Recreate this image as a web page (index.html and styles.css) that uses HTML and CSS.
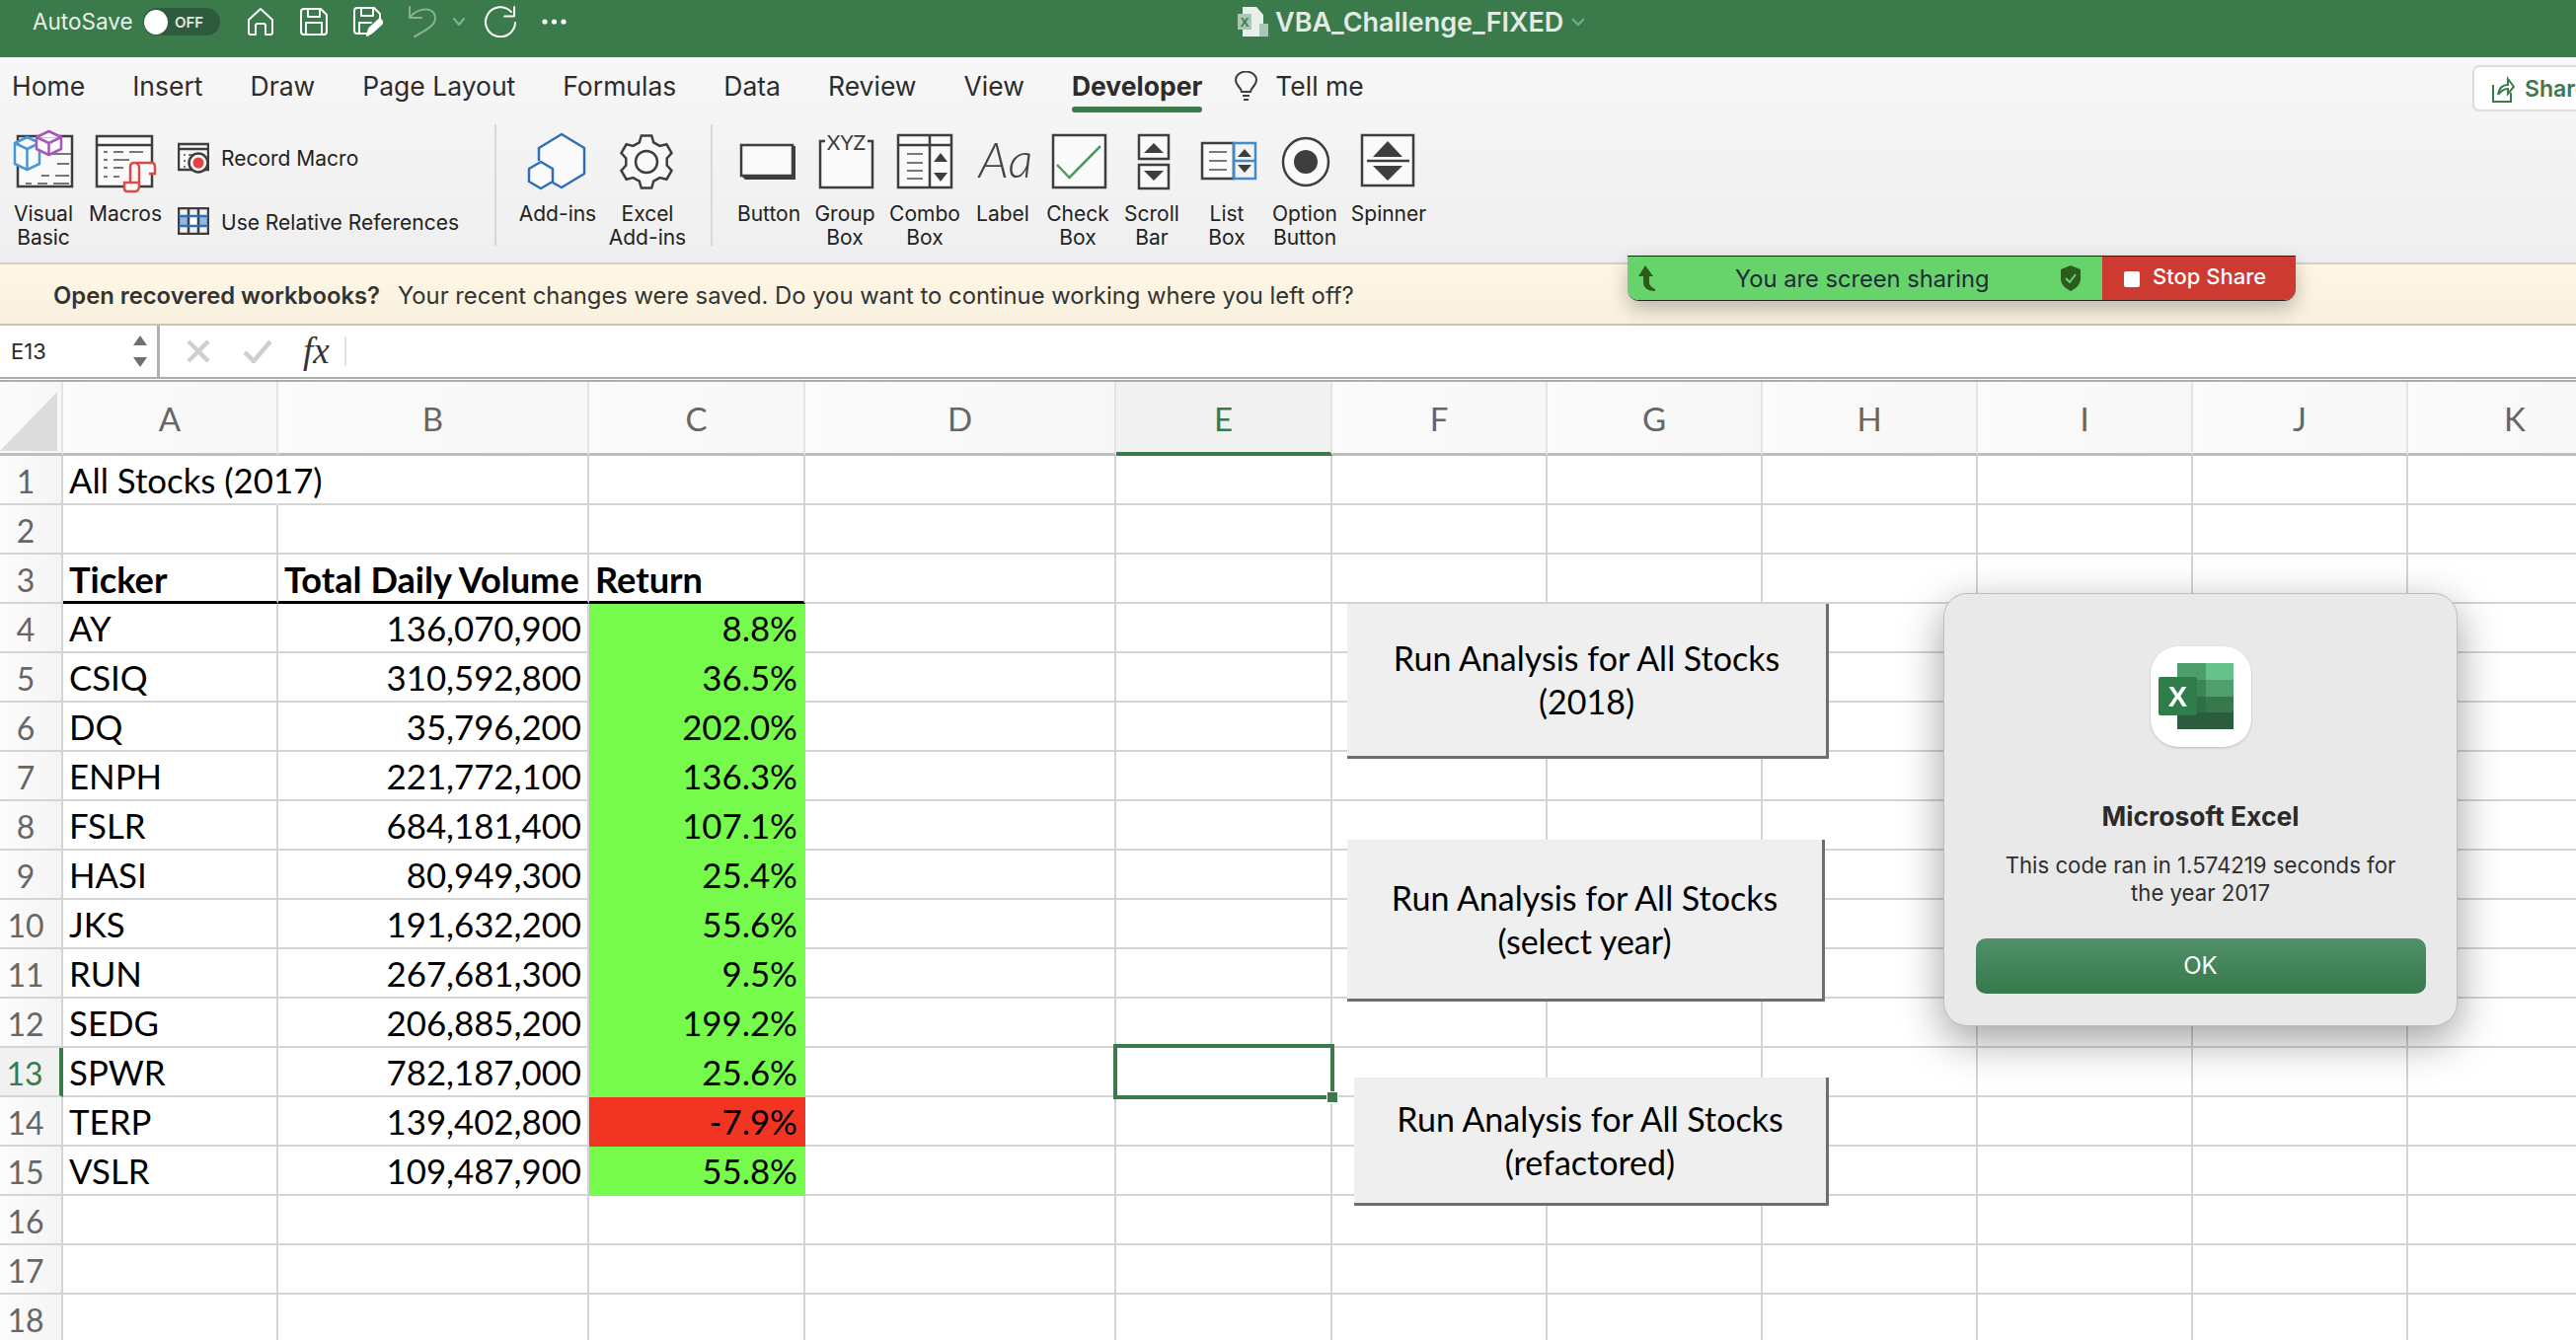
FILE: index.html
```html
<!DOCTYPE html>
<html lang="en">
<head>
    <meta charset="UTF-8">
    <title>VBA_Challenge_FIXED</title>
    <link rel="stylesheet" href="styles.css">
</head>
<body>
<div class="page">
    <div class="titlebar">
        <span class="autosave">AutoSave</span>
        <span class="toggle"><span class="knob"></span><span class="toggle-text">OFF</span></span>
        <div class="quick">
            <svg width="28" height="30" viewBox="0 0 28 30" class="qi"><path d="M2 13 14 2l12 11v13a2 2 0 0 1-2 2h-5v-9a2 2 0 0 0-2-2h-6a2 2 0 0 0-2 2v9H4a2 2 0 0 1-2-2z"/></svg>
            <svg width="28" height="28" viewBox="0 0 28 28" class="qi"><path d="M4 1h17l6 6v17a3 3 0 0 1-3 3H4a3 3 0 0 1-3-3V4a3 3 0 0 1 3-3zM8 1v8h12V1M6 27V15h16v12"/></svg>
            <svg width="30" height="30" viewBox="0 0 30 30" class="qi"><path d="M15 27H4a3 3 0 0 1-3-3V4a3 3 0 0 1 3-3h17l6 6v6M8 1v8h12V1M6 27V16h12"/><path d="M14 29l2-7 11-10 3 4-11 10z" class="qi-fill"/></svg>
            <svg width="28" height="32" viewBox="0 0 28 32" class="qi dim"><path d="M1 1v11h12M1 12C8 2 27-1 27 13c0 6-8 11-21 18"/></svg>
            <svg width="12" height="9" viewBox="0 0 12 9" class="qi dim qi-chev"><path d="M1 1l5 6 5-6"/></svg>
            <svg width="32" height="32" viewBox="0 0 32 32" class="qi qi-redo"><path d="M27 6A15 15 0 1 0 31 17M30 1v9.5H20"/></svg>
            <svg width="25" height="6" viewBox="0 0 25 6" class="qi-dots"><circle cx="3" cy="3" r="2.6"/><circle cx="12.5" cy="3" r="2.6"/><circle cx="22" cy="3" r="2.6"/></svg>
        </div>
        <div class="doc-title">
            <svg width="32" height="32" viewBox="0 0 32 32"><path d="M5 1h14l7 8v22H5z" fill="#e9f0eb"/><rect x="0" y="8" width="14" height="16" fill="#a9c7b3"/><text x="7" y="21" class="doc-x">X</text><rect x="22" y="18" width="9" height="13" fill="#a9c7b3"/></svg>
            <span>VBA_Challenge_FIXED</span>
            <svg width="14" height="9" viewBox="0 0 14 9" class="doc-chev"><path d="M1 1l6 6 6-6"/></svg>
        </div>
    </div>

    <div class="ribbon">
        <div class="tabs">
            <span class="tab">Home</span>
            <span class="tab">Insert</span>
            <span class="tab">Draw</span>
            <span class="tab">Page Layout</span>
            <span class="tab">Formulas</span>
            <span class="tab">Data</span>
            <span class="tab">Review</span>
            <span class="tab">View</span>
            <span class="tab active">Developer</span>
            <span class="tell">
                <svg width="23" height="30" viewBox="0 0 23 30" class="ln-thin"><path d="M7 21c0-4-6-6-6-12a10.5 8.5 0 0 1 21 0c0 6-6 8-6 12zM8 25h7M9 29h5"/></svg>
                Tell me
            </span>
            <span class="share">
                <svg width="24" height="30" viewBox="0 0 24 30" class="ln-share"><path d="M2 11v17h18v-9M7 21c1-7 5-10 10-10V5l6 8-6 7v-5c-4 0-7 2-10 6z"/></svg>
                Share
            </span>
        </div>
        <div class="tools">
            <div class="item w-vb">
                <svg width="64" height="70" viewBox="0 0 64 70" class="ln">
                    <path d="M6 8h55v51H6z"/>
                    <path d="M40 26h20M46 36h12M30 48h8M44 48h14M14 56h6M26 56h10M42 56h16" class="dash"/>
                    <path d="M15.5 9 28 15v21l-12.5 6L3 36V15zM3 15l12.5 6L28 15M15.5 21v21" class="blue"/>
                    <path d="M37.5 3 50 9v12l-12.5 6L25 21V9zM25 9l12.5 6L50 9M37.5 15v12" class="purple"/>
                </svg>
                <span class="label">Visual<br>Basic</span>
            </div>
            <div class="item w-macros">
                <svg width="64" height="70" viewBox="0 0 64 70" class="ln">
                    <path d="M3 8h56v51H3zM3 17h56"/>
                    <path d="M10 24h4M20 24h10M36 24h14M10 32h4M20 32h16M10 40h4M20 40h10M10 49h4M20 49h6" class="dash"/>
                    <path d="M37 55V39c0-3 2-4 4-4h18c2 0 3 2 3 5v6h-6M41 35c3 0 5 2 5 5v18c0 4-1 6-4 6H34c-2 0-3-1-3-3v-6h15" class="red"/>
                </svg>
                <span class="label">Macros</span>
            </div>
            <div class="stack">
                <div class="stack-row">
                    <svg width="32" height="32" viewBox="0 0 32 32" class="ln">
                        <path d="M1 2h30v26H1zM1 7h30"/>
                        <path d="M6 13h2M11 13h5M6 19h2M6 25h2" class="dash"/>
                        <circle cx="21" cy="21" r="9.5" class="rec-ring"/>
                        <circle cx="21" cy="21" r="5.5" class="rec-dot"/>
                    </svg>
                    <span class="label">Record Macro</span>
                </div>
                <div class="stack-row second">
                    <svg width="32" height="28" viewBox="0 0 32 28" class="ln">
                        <rect x="10.5" y="9" width="11" height="10" class="rel-mid"/>
                        <rect x="1" y="9" width="10" height="10" class="rel-fill"/>
                        <rect x="21" y="9" width="10" height="10" class="rel-fill"/>
                        <path d="M1 1h30v26H1zM11 1v26M21 1v26" class="rel-frame"/>
                        <path d="M1 9h30M1 19h30" class="rel-line"/>
                    </svg>
                    <span class="label">Use Relative References</span>
                </div>
            </div>
            <div class="sep"></div>
            <div class="item w-addins">
                <svg width="64" height="70" viewBox="0 0 64 70" class="ln">
                    <path d="M13 33V20L36 6l23 14v26L36 60l-9-5" class="bluehex"/>
                    <path d="M15 34l12 7v13l-12 7-12-7V41z" class="bluehex"/>
                </svg>
                <span class="label">Add-ins</span>
            </div>
            <div class="item w-excel">
                <svg width="64" height="70" viewBox="0 0 64 70" class="ln">
                    <path d="M23.8 14.3 25.8 7.5H36.2L38.2 14.3 44.5 17.9 51.4 16.3 56.5 25.2 51.7 30.4V37.6L56.5 42.8 51.4 51.7 44.5 50.1 38.2 53.7 36.2 60.5H25.8L23.8 53.7 17.5 50.1 10.6 51.7 5.5 42.8 10.3 37.6V30.4L5.5 25.2 10.6 16.3 17.5 17.9z"/>
                    <circle cx="31" cy="34" r="11"/>
                </svg>
                <span class="label">Excel<br>Add-ins</span>
            </div>
            <div class="sep sep-two"></div>
            <div class="item w-button">
                <svg width="64" height="70" viewBox="0 0 64 70" class="ln">
                    <path d="M59 18v34H8l-4-4h51V18z" class="solid"/>
                    <rect x="4" y="17" width="52" height="31"/>
                </svg>
                <span class="label">Button</span>
            </div>
            <div class="item w-group">
                <svg width="64" height="70" viewBox="0 0 64 70" class="ln">
                    <path d="M12 13H7v47h53V13h-5"/>
                    <text x="33.5" y="22" class="xyz">XYZ</text>
                </svg>
                <span class="label">Group<br>Box</span>
            </div>
            <div class="item w-combo">
                <svg width="64" height="70" viewBox="0 0 64 70" class="ln">
                    <rect x="37" y="6" width="23" height="11" class="solid"/>
                    <path d="M5 7h54v53H5zM5 17h54M37 7v53"/>
                    <path d="M14 26h16M14 35h16M14 43h16M14 51h16" class="bars"/>
                    <path d="M48 25l7 9H41zM41 45h14l-7 9z" class="solid"/>
                </svg>
                <span class="label">Combo<br>Box</span>
            </div>
            <div class="item w-label">
                <svg width="64" height="70" viewBox="0 0 64 70">
                    <text x="35" y="50" class="aa">Aa</text>
                </svg>
                <span class="label">Label</span>
            </div>
            <div class="item w-check">
                <svg width="64" height="70" viewBox="0 0 64 70" class="ln">
                    <path d="M7 7h53v53H7z"/>
                    <path d="M11 37l12.5 13L55 18" class="tick"/>
                </svg>
                <span class="label">Check<br>Box</span>
            </div>
            <div class="item w-scroll">
                <svg width="64" height="70" viewBox="0 0 64 70" class="ln">
                    <path d="M19 7h30v24H19zM19 37h30v24H19z"/>
                    <path d="M34 15l10 10H24zM24 43h20l-10 10z" class="solid"/>
                </svg>
                <span class="label">Scroll<br>Bar</span>
            </div>
            <div class="item w-list">
                <svg width="64" height="70" viewBox="0 0 64 70" class="ln">
                    <path d="M7 15h32v36H7z"/>
                    <path d="M14 24h18M14 33h18M14 42h18" class="bars"/>
                    <path d="M39 15h22v36H39zM39 33h22" class="list-blue"/>
                    <path d="M50 21l7 8H43zM43 37h14l-7 8z" class="solid"/>
                </svg>
                <span class="label">List<br>Box</span>
            </div>
            <div class="item w-option">
                <svg width="64" height="70" viewBox="0 0 64 70" class="ln">
                    <ellipse cx="33" cy="34" rx="23" ry="24"/>
                    <circle cx="33" cy="34" r="12" class="solid"/>
                </svg>
                <span class="label">Option<br>Button</span>
            </div>
            <div class="item w-spinner">
                <svg width="64" height="70" viewBox="0 0 64 70" class="ln">
                    <path d="M5 7h52v51H5zM10 33h43"/>
                    <path d="M31 13l15 16H16zM16 38h30L31 53z" class="solid"/>
                </svg>
                <span class="label">Spinner</span>
            </div>
        </div>
    </div>

    <div class="banner">
        <b>Open recovered workbooks?</b>
        <span>Your recent changes were saved. Do you want to continue working where you left off?</span>
    </div>

    <div class="formula">
        <div class="namebox">
            <span>E13</span>
            <svg width="14" height="32" viewBox="0 0 14 32" class="name-arrows"><path d="M7 0l7 10H0zM0 22h14L7 32z"/></svg>
        </div>
        <div class="fx-btns">
            <svg width="24" height="24" viewBox="0 0 24 24" class="fx-mark"><path d="M2 2l20 20M22 2 2 22"/></svg>
            <svg width="30" height="24" viewBox="0 0 30 24" class="fx-mark"><path d="M2 13l9 9L28 2"/></svg>
            <span class="fx">fx</span>
            <span class="fx-sep"></span>
        </div>
    </div>

    <div class="sheet">
        <table class="grid">
            <thead>
                <tr>
                    <th class="corner"><div class="corner-tri"></div></th>
                    <th class="c-a">A</th><th class="c-b">B</th><th class="c-c">C</th><th class="c-d">D</th>
                    <th class="c-e cur">E</th><th class="c-f">F</th><th class="c-f">G</th><th class="c-f">H</th>
                    <th class="c-f">I</th><th class="c-f">J</th><th class="c-f">K</th>
                </tr>
            </thead>
            <tbody>
                <tr><th>1</th><td class="nosplit">All Stocks (2017)</td><td></td><td></td><td></td><td></td><td></td><td></td><td></td><td></td><td></td><td></td></tr>
                <tr><th>2</th><td></td><td></td><td></td><td></td><td></td><td></td><td></td><td></td><td></td><td></td><td></td></tr>
                <tr class="heads"><th>3</th><td>Ticker</td><td>Total Daily Volume</td><td>Return</td><td></td><td></td><td></td><td></td><td></td><td></td><td></td><td></td></tr>
                <tr><th>4</th><td>AY</td><td class="num">136,070,900</td><td class="num up">8.8%</td><td></td><td></td><td></td><td></td><td></td><td></td><td></td><td></td></tr>
                <tr><th>5</th><td>CSIQ</td><td class="num">310,592,800</td><td class="num up">36.5%</td><td></td><td></td><td></td><td></td><td></td><td></td><td></td><td></td></tr>
                <tr><th>6</th><td>DQ</td><td class="num">35,796,200</td><td class="num up">202.0%</td><td></td><td></td><td></td><td></td><td></td><td></td><td></td><td></td></tr>
                <tr><th>7</th><td>ENPH</td><td class="num">221,772,100</td><td class="num up">136.3%</td><td></td><td></td><td></td><td></td><td></td><td></td><td></td><td></td></tr>
                <tr><th>8</th><td>FSLR</td><td class="num">684,181,400</td><td class="num up">107.1%</td><td></td><td></td><td></td><td></td><td></td><td></td><td></td><td></td></tr>
                <tr><th>9</th><td>HASI</td><td class="num">80,949,300</td><td class="num up">25.4%</td><td></td><td></td><td></td><td></td><td></td><td></td><td></td><td></td></tr>
                <tr><th>10</th><td>JKS</td><td class="num">191,632,200</td><td class="num up">55.6%</td><td></td><td></td><td></td><td></td><td></td><td></td><td></td><td></td></tr>
                <tr><th>11</th><td>RUN</td><td class="num">267,681,300</td><td class="num up">9.5%</td><td></td><td></td><td></td><td></td><td></td><td></td><td></td><td></td></tr>
                <tr><th>12</th><td>SEDG</td><td class="num">206,885,200</td><td class="num up">199.2%</td><td></td><td></td><td></td><td></td><td></td><td></td><td></td><td></td></tr>
                <tr><th class="cur-row">13</th><td>SPWR</td><td class="num">782,187,000</td><td class="num up">25.6%</td><td></td><td></td><td></td><td></td><td></td><td></td><td></td><td></td></tr>
                <tr><th>14</th><td>TERP</td><td class="num">139,402,800</td><td class="num down">-7.9%</td><td></td><td></td><td></td><td></td><td></td><td></td><td></td><td></td></tr>
                <tr><th>15</th><td>VSLR</td><td class="num">109,487,900</td><td class="num up">55.8%</td><td></td><td></td><td></td><td></td><td></td><td></td><td></td><td></td></tr>
                <tr><th>16</th><td></td><td></td><td></td><td></td><td></td><td></td><td></td><td></td><td></td><td></td><td></td></tr>
                <tr><th>17</th><td></td><td></td><td></td><td></td><td></td><td></td><td></td><td></td><td></td><td></td><td></td></tr>
                <tr><th>18</th><td></td><td></td><td></td><td></td><td></td><td></td><td></td><td></td><td></td><td></td><td></td></tr>
            </tbody>
        </table>

        <div class="selected"><span class="handle"></span></div>

        <div class="macro-btn btn-one">Run Analysis for All Stocks<br>(2018)</div>
        <div class="macro-btn btn-two">Run Analysis for All Stocks<br>(select year)</div>
        <div class="macro-btn btn-three">Run Analysis for All Stocks<br>(refactored)</div>

        <div class="dialog">
            <svg width="102" height="102" viewBox="0 0 102 102" class="app-icon">
                <rect width="102" height="102" rx="28" fill="#fff"/>
                <rect x="27" y="17" width="29" height="17" fill="#4c9e6b"/>
                <rect x="56" y="17" width="28" height="17" fill="#66c18a"/>
                <rect x="27" y="34" width="29" height="17" fill="#3c8554"/>
                <rect x="56" y="34" width="28" height="17" fill="#4fa06e"/>
                <rect x="27" y="51" width="29" height="16" fill="#2e6f47"/>
                <rect x="56" y="51" width="28" height="16" fill="#37794d"/>
                <rect x="27" y="67" width="57" height="17" fill="#2b5c3d"/>
                <rect x="8" y="31" width="39" height="39" rx="2" fill="#2f7d4b"/>
                <text x="27.5" y="61" class="app-x">X</text>
            </svg>
            <div class="dialog-title">Microsoft Excel</div>
            <div class="dialog-msg">This code ran in 1.574219 seconds for<br>the year 2017</div>
            <div class="dialog-ok">OK</div>
        </div>
    </div>

    <div class="sharing">
        <div class="sharing-left">
            <svg width="26" height="26" viewBox="0 0 26 26" class="sharing-arrow"><path d="M8 0l8 11h-4v6c0 3 2 5 6 7v2c-7 0-12-3-12-9v-6H1z"/></svg>
            <span class="sharing-text">You are screen sharing</span>
            <svg width="22" height="26" viewBox="0 0 22 26" class="sharing-shield"><path d="M11 0l10 4v9c0 6-4 10-10 13C5 23 1 19 1 13V4z"/><path d="M6 13l4 4 6-8" class="shield-tick"/></svg>
        </div>
        <div class="sharing-stop"><span class="stop-box"></span>Stop Share</div>
    </div>
</div>
</body>
</html>
```

FILE: styles.css
```css
html, body {
    margin: 0;
    padding: 0;
    overflow: hidden;
}
body {
    font-family: Inter, "Noto Sans", sans-serif;
    color: #2c2c2c;
    background-color: #fff;
}
.page {
    position: relative;
    width: 2610px;
    height: 1358px;
    overflow: hidden;
}

/* title bar */
.titlebar {
    height: 58px;
    background-color: #3b7a4b;
    display: flex;
    align-items: flex-start;
    padding-left: 33px;
    box-sizing: border-box;
    color: #e8efe9;
}
.autosave {
    font-size: 22.5px;
    line-height: 44px;
    width: 100px;
    white-space: nowrap;
}
.toggle {
    width: 78px;
    height: 28px;
    margin: 8px 0 0 12px;
    border-radius: 14px;
    background-color: #2f5a3e;
    display: flex;
    align-items: center;
    padding-left: 1px;
    box-sizing: border-box;
}
.knob {
    width: 24px;
    height: 25px;
    border-radius: 50%;
    background-color: #fff;
}
.toggle-text {
    font-size: 15px;
    font-weight: 600;
    margin-left: 7px;
    color: #dfe8e1;
}
.quick {
    display: flex;
    align-items: center;
    gap: 26px;
    margin: 6px 0 0 27px;
    height: 32px;
}
.qi {
    fill: none;
    stroke: #fff;
    stroke-width: 2;
    stroke-linejoin: round;
    stroke-linecap: round;
}
.qi-fill {
    fill: #fff;
}
.dim {
    opacity: 0.4;
}
.qi-chev {
    margin-left: -9px;
}
.qi-redo {
    margin-left: -6px;
}
.qi-dots {
    fill: #fff;
}
.doc-title {
    display: flex;
    align-items: center;
    margin: 6px 0 0 680px;
    height: 32px;
    font-size: 27px;
    font-weight: 600;
    color: #e3ebe5;
    white-space: nowrap;
}
.doc-title span {
    margin-left: 6px;
}
.doc-x {
    font-family: "Liberation Sans", sans-serif;
    font-size: 13px;
    fill: #3b7a4b;
    text-anchor: middle;
}
.doc-chev {
    margin-left: 8px;
    fill: none;
    stroke: #7fa88c;
    stroke-width: 2;
}

/* ribbon */
.ribbon {
    height: 210px;
    box-sizing: border-box;
    border-bottom: 2px solid #d2d0cd;
    background: linear-gradient(#f7f7f7, #efefef);
}
.tabs {
    height: 68px;
    display: flex;
    padding-left: 12px;
    gap: 48px;
    font-size: 26.5px;
    line-height: 58px;
    white-space: nowrap;
}
.tab {
    position: relative;
}
.tab.active {
    font-weight: 700;
}
.tab.active::after {
    content: "";
    position: absolute;
    left: 0;
    right: 0;
    top: 50px;
    height: 6px;
    border-radius: 3px;
    background-color: #3b7a4b;
}
.tell {
    display: flex;
    align-items: center;
    height: 58px;
    gap: 18px;
    margin-left: -15px;
}
.ln-thin {
    fill: none;
    stroke: #3e3e3e;
    stroke-width: 2;
}
.share {
    margin-left: auto;
    margin-right: -40px;
    margin-top: 8px;
    width: 145px;
    height: 47px;
    box-sizing: border-box;
    background-color: #fff;
    border: 2px solid #dcdcdc;
    border-radius: 7px;
    display: flex;
    align-items: center;
    gap: 10px;
    padding-left: 17px;
    color: #3b7a4b;
    font-size: 23px;
    font-weight: 600;
}
.ln-share {
    fill: none;
    stroke: #3b7a4b;
    stroke-width: 2;
}
.tools {
    display: flex;
    height: 140px;
    padding-left: 8px;
}
.item {
    display: flex;
    flex-direction: column;
    align-items: center;
    padding-top: 4px;
    flex: none;
}
.item svg {
    margin-bottom: 5px;
}
.label {
    font-size: 21px;
    line-height: 24px;
    text-align: center;
    color: #222;
    white-space: nowrap;
}
.w-vb { width: 72px; }
.w-macros { width: 94px; }
.w-addins { width: 90px; margin-left: 17px; }
.w-excel { width: 92px; }
.w-button { width: 72px; margin-left: 21px; }
.w-group { width: 82px; }
.w-combo { width: 80px; }
.w-label { width: 78px; }
.w-check { width: 74px; }
.w-scroll { width: 76px; }
.w-list { width: 76px; }
.w-option { width: 82px; }
.w-spinner { width: 88px; }
.stack {
    width: 321px;
    margin-left: 6px;
    padding-top: 18px;
    flex: none;
}
.stack-row {
    display: flex;
    align-items: center;
    gap: 12px;
    height: 32px;
}
.stack-row .label {
    padding-top: 2px;
}
.stack-row.second {
    margin-top: 34px;
    height: 28px;
}
.stack-row.second .label {
    padding-top: 4px;
}
.sep {
    width: 2px;
    height: 123px;
    background-color: #d8d8d8;
    flex: none;
}
.sep-two {
    margin-left: 18px;
}

/* ribbon icon strokes */
.ln {
    fill: #fafafa;
    stroke: #3e3e3e;
    stroke-width: 2.5;
}
.dash {
    fill: none;
    stroke: #777;
    stroke-width: 2;
}
.bars {
    fill: none;
    stroke: #777;
    stroke-width: 2;
}
.blue {
    stroke: #4a97d6;
    stroke-linejoin: round;
}
.purple {
    stroke: #a259b8;
    stroke-linejoin: round;
}
.red {
    stroke: #dd4a45;
}
.rec-ring {
    fill: #f5f5f5;
}
.rec-dot {
    fill: #e2433e;
    stroke: none;
}
.rel-fill {
    fill: #8fbbe8;
    stroke: none;
}
.rel-mid {
    fill: #fff;
    stroke: none;
}
.rel-frame {
    fill: none;
}
.rel-line {
    fill: none;
    stroke: #2f6fb8;
}
.bluehex {
    fill: #fafafa;
    stroke: #2f6fb8;
    stroke-linejoin: round;
}
.solid {
    fill: #3e3e3e;
    stroke: none;
}
.xyz {
    font-family: Lato, sans-serif;
    font-size: 21px;
    font-weight: 400;
    fill: #3e3e3e;
    stroke: none;
    text-anchor: middle;
}
.aa {
    font-family: Lato, sans-serif;
    font-size: 50px;
    font-style: italic;
    font-weight: 300;
    fill: #444;
    text-anchor: middle;
}
.tick {
    fill: none;
    stroke: #4d9a5e;
}
.list-blue {
    fill: none;
    stroke: #3f8bd0;
}

/* recovery banner */
.banner {
    height: 60px;
    border-bottom: 2px solid #c9c3b3;
    background: linear-gradient(#fff6e4, #f9f1df);
    padding-left: 54px;
    box-sizing: content-box;
    display: flex;
    align-items: center;
    gap: 18px;
    font-size: 23.8px;
    color: #333;
    white-space: nowrap;
}
.banner b {
    font-weight: 600;
    padding-top: 2px;
}
.banner span {
    padding-top: 2px;
}

/* formula bar */
.formula {
    height: 57px;
    box-sizing: border-box;
    border-bottom: 5px double #acacac;
    display: flex;
    background-color: #fff;
}
.namebox {
    width: 162px;
    box-sizing: border-box;
    border-right: 3px solid #b0b0b0;
    display: flex;
    align-items: center;
    justify-content: space-between;
    padding: 0 10px 0 11px;
    font-size: 22px;
    color: #2a2a2a;
}
.name-arrows {
    fill: #6e6e6e;
}
.fx-btns {
    display: flex;
    align-items: center;
    padding-left: 27px;
}
.fx-mark {
    fill: none;
    stroke: #cfcfcf;
    stroke-width: 4.5;
    margin-right: 33px;
}
.fx {
    font-family: "Liberation Serif", serif;
    font-style: italic;
    font-size: 37px;
    line-height: 40px;
    margin-left: -2px;
    color: #333;
}
.fx-sep {
    width: 2px;
    height: 30px;
    background-color: #e2e2e2;
    margin-left: 15px;
}

/* sheet */
.sheet {
    position: relative;
    height: 971px;
    overflow: hidden;
}
.grid {
    border-collapse: separate;
    border-spacing: 0;
    table-layout: fixed;
    width: 2658px;
    font-family: Lato, sans-serif;
    font-size: 34.8px;
    color: #000;
}
.grid thead th {
    height: 75px;
    box-sizing: border-box;
    background: linear-gradient(90deg, #fbfbfb, #f7f7f7);
    border-right: 2px solid #e4e4e4;
    border-bottom: 3px solid #bdbdbd;
    font-size: 33px;
    font-weight: 400;
    color: #666;
    padding: 2px 0 0;
}
.grid tbody th {
    width: 64px;
    box-sizing: border-box;
    background: linear-gradient(90deg, #fcfcfc, #f4f4f4);
    border-right: 2px solid #d4d4d4;
    border-bottom: 2px solid #d4d4d4;
    font-weight: 400;
    color: #666;
    padding: 2px 10px 0 0;
    font-size: 32px;
    text-align: center;
}
.grid td {
    height: 50px;
    box-sizing: border-box;
    padding: 2px 6px 0;
    border-right: 2px solid #d4d4d4;
    border-bottom: 2px solid #d4d4d4;
    white-space: nowrap;
    line-height: 40px;
}
.corner { width: 64px; }
.grid thead th.corner { padding: 0; }
.c-a { width: 218px; }
.c-b { width: 315px; }
.c-c { width: 219px; }
.c-d { width: 315px; }
.c-e { width: 219px; }
.c-f { width: 218px; }
.corner-tri {
    width: 58px;
    height: 60px;
    margin-top: 8px;
    background-color: #dcdcdc;
    clip-path: polygon(100% 0, 100% 100%, 0 100%);
}
.grid thead th.cur {
    background: #f1f1f1;
    border-bottom: 4px solid #3b7a4b;
    color: #3b7a4b;
}
.grid tbody th.cur-row {
    background: #f1f1f1;
    border-right: 4px solid #3b7a4b;
    color: #3b7a4b;
}
.grid td.nosplit {
    border-right-color: transparent;
}
.heads td {
    font-size: 36.2px;
    font-weight: 700;
}
.heads td:nth-child(-n+4) {
    border-bottom: 3px solid #000;
}
.num {
    text-align: right;
}
.grid td.up {
    background-color: #76fb4d;
    border-color: #76fb4d;
}
.grid td.down {
    background-color: #f23522;
    border-color: #f23522;
}
.selected {
    position: absolute;
    left: 1128px;
    top: 671px;
    width: 224px;
    height: 56px;
    box-sizing: border-box;
    border: 4px solid #3b7a4b;
}
.handle {
    position: absolute;
    right: -8px;
    bottom: -8px;
    width: 10px;
    height: 10px;
    background-color: #3b7a4b;
    border: 1px solid #fff;
}
.macro-btn {
    position: absolute;
    box-sizing: border-box;
    display: flex;
    align-items: center;
    justify-content: center;
    text-align: center;
    background-color: #efefef;
    border-right: 3px solid #6e6e6e;
    border-bottom: 3px solid #6e6e6e;
    font-family: Lato, sans-serif;
    font-size: 34px;
    line-height: 44px;
    color: #000;
}
.btn-one { left: 1365px; top: 225px; width: 488px; height: 157px; }
.btn-two { left: 1365px; top: 464px; width: 484px; height: 164px; }
.btn-three { left: 1372px; top: 705px; width: 481px; height: 130px; }

/* message box */
.dialog {
    position: absolute;
    left: 1969px;
    top: 214px;
    width: 521px;
    height: 439px;
    box-sizing: border-box;
    border: 1px solid #bdbdbd;
    border-radius: 24px;
    background-color: #e8e9e8;
    box-shadow: 0 14px 44px rgba(0, 0, 0, 0.38);
    display: flex;
    flex-direction: column;
    align-items: center;
    padding-top: 53px;
    text-align: center;
}
.app-icon {
    filter: drop-shadow(0 1px 1px rgba(0, 0, 0, 0.2));
}
.app-x {
    font-family: "Liberation Sans", sans-serif;
    font-size: 29px;
    font-weight: 700;
    fill: #fff;
    text-anchor: middle;
}
.dialog-title {
    margin-top: 55px;
    font-size: 26.5px;
    font-weight: 700;
    line-height: 30px;
    color: #2b2b2b;
}
.dialog-msg {
    margin-top: 21px;
    font-size: 22.2px;
    line-height: 28px;
    color: #2e2e2e;
}
.dialog-ok {
    margin-top: 32px;
    width: 456px;
    height: 56px;
    line-height: 56px;
    border-radius: 10px;
    background: linear-gradient(#4f9068, #37784c);
    color: #fff;
    font-size: 24px;
}

/* zoom share bar */
.sharing {
    position: absolute;
    left: 1649px;
    top: 259px;
    width: 677px;
    height: 46px;
    display: flex;
    box-sizing: border-box;
    border-top: 1px solid #222;
    border-bottom: 1px solid #222;
    border-radius: 0 0 12px 12px;
    overflow: hidden;
    box-shadow: 0 8px 20px rgba(0, 0, 0, 0.25);
}
.sharing-left {
    width: 481px;
    display: flex;
    align-items: center;
    background-color: #66d46b;
    padding-left: 10px;
    box-sizing: border-box;
    color: #222a3a;
    font-size: 23.7px;
}
.sharing-arrow {
    fill: #2f5a1d;
    flex: none;
}
.sharing-text {
    margin-left: 73px;
    width: 329px;
    flex: none;
    white-space: nowrap;
}
.sharing-shield {
    fill: #2f5a1d;
    flex: none;
}
.shield-tick {
    fill: none;
    stroke: #66d46b;
    stroke-width: 2;
}
.sharing-stop {
    flex: 1;
    background-color: #cd3a32;
    color: #fff;
    display: flex;
    align-items: center;
    padding: 0 0 4px 22px;
    font-size: 22px;
    font-weight: 500;
    gap: 13px;
}
.stop-box {
    width: 16px;
    height: 16px;
    margin-top: 6px;
    border-radius: 2px;
    background-color: #fff;
}
```
